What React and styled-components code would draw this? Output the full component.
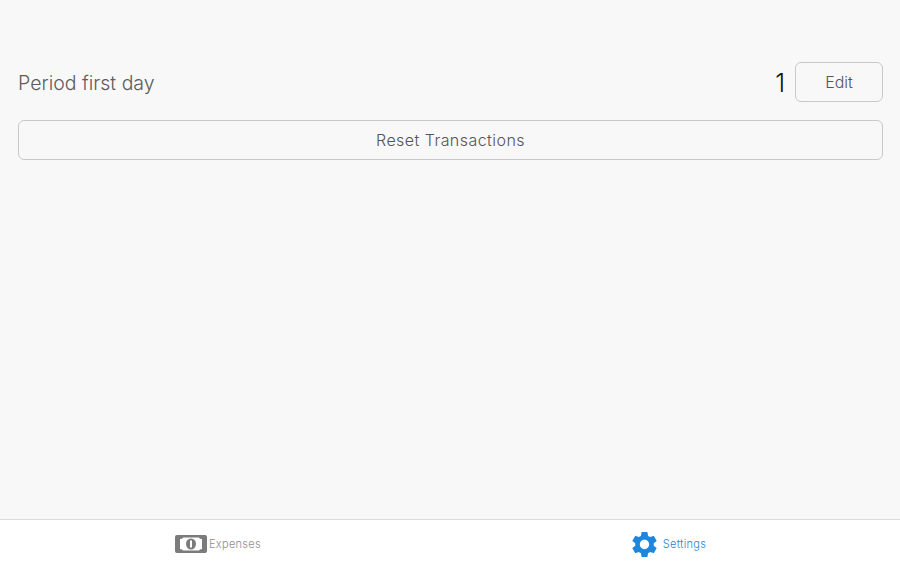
import React from 'react';
import styled, { createGlobalStyle } from 'styled-components';
import { MdSettings } from 'react-icons/md';

const GlobalStyle = createGlobalStyle`
  html, body {
    margin: 0;
    padding: 0;
    height: 100%;
    background: #f8f8f8;
    font-family: Inter, Roboto, "Liberation Sans", sans-serif;
  }
  #root {
    height: 100%;
  }
`;

const Screen = styled.div`
  height: 563px;
  display: flex;
  flex-direction: column;
`;

const Content = styled.div`
  flex: 1;
  padding: 62px 17px 0 18px;
  display: flex;
  flex-direction: column;
  gap: 18px;
`;

const Row = styled.div`
  height: 40px;
  display: flex;
  align-items: center;
  justify-content: space-between;
`;

const Label = styled.span`
  font-size: 19.5px;
  padding-top: 2px;
  font-weight: 300;
  color: #5c5c5c;
`;

const RowEnd = styled.div`
  display: flex;
  align-items: center;
  gap: 10px;
`;

const Value = styled.span`
  font-size: 25px;
  padding-top: 2px;
  font-weight: 300;
  color: #111;
`;

const OutlineButton = styled.button`
  box-sizing: border-box;
  height: 40px;
  width: ${(p) => (p.$wide ? '100%' : '88px')};
  background: transparent;
  border: 1.5px solid #c9c9c9;
  border-radius: 6px;
  font-family: inherit;
  font-size: 16px;
  font-weight: 300;
  letter-spacing: ${(p) => (p.$wide ? '0.45px' : '0')};
  color: #555;
  padding: 0;
`;

const TabBar = styled.nav`
  height: 43px;
  background: #fff;
  border-top: 1px solid #dcdcdc;
  display: grid;
  grid-template-columns: 1fr 1fr;
`;

const Tab = styled.div`
  display: flex;
  align-items: center;
  justify-content: center;
  gap: ${(p) => p.$gap}px;
  font-size: 11px;
  font-weight: 300;
  letter-spacing: 0.3px;
  padding: 5px 15px 0 0;
`;

const TabLabel = styled.span`
  color: ${(p) => p.$color};
`;

function MoneyIcon() {
  return (
    <svg width="34" height="20" viewBox="0 0 34 20">
      <path
        fillRule="evenodd"
        fill="#7b7b7b"
        d="M3 1h28a2 2 0 0 1 2 2v14a2 2 0 0 1-2 2H3a2 2 0 0 1-2-2V3a2 2 0 0 1 2-2z M6 5q2.500 0 3-1.500h16q.5 1.500 3 1.500v10q-2.500 0-3 1.500H9q-.5-1.500-3-1.500z"
      />
      <ellipse cx="17" cy="10" rx="5" ry="5.500" fill="#7b7b7b" />
      <rect x="16" y="6.500" width="2" height="7" fill="#fff" />
    </svg>
  );
}

export default function App() {
  return (
    <Screen>
      <GlobalStyle />
      <Content>
        <Row>
          <Label>Period first day</Label>
          <RowEnd>
            <Value>1</Value>
            <OutlineButton>Edit</OutlineButton>
          </RowEnd>
        </Row>
        <OutlineButton $wide>Reset Transactions</OutlineButton>
      </Content>
      <TabBar>
        <Tab $gap={1}>
          <MoneyIcon />
          <TabLabel $color="#8e8e93">Expenses</TabLabel>
        </Tab>
        <Tab $gap={3}>
          <MdSettings size={31} color="#1f86dc" />
          <TabLabel $color="#2088dc">Settings</TabLabel>
        </Tab>
      </TabBar>
    </Screen>
  );
}
